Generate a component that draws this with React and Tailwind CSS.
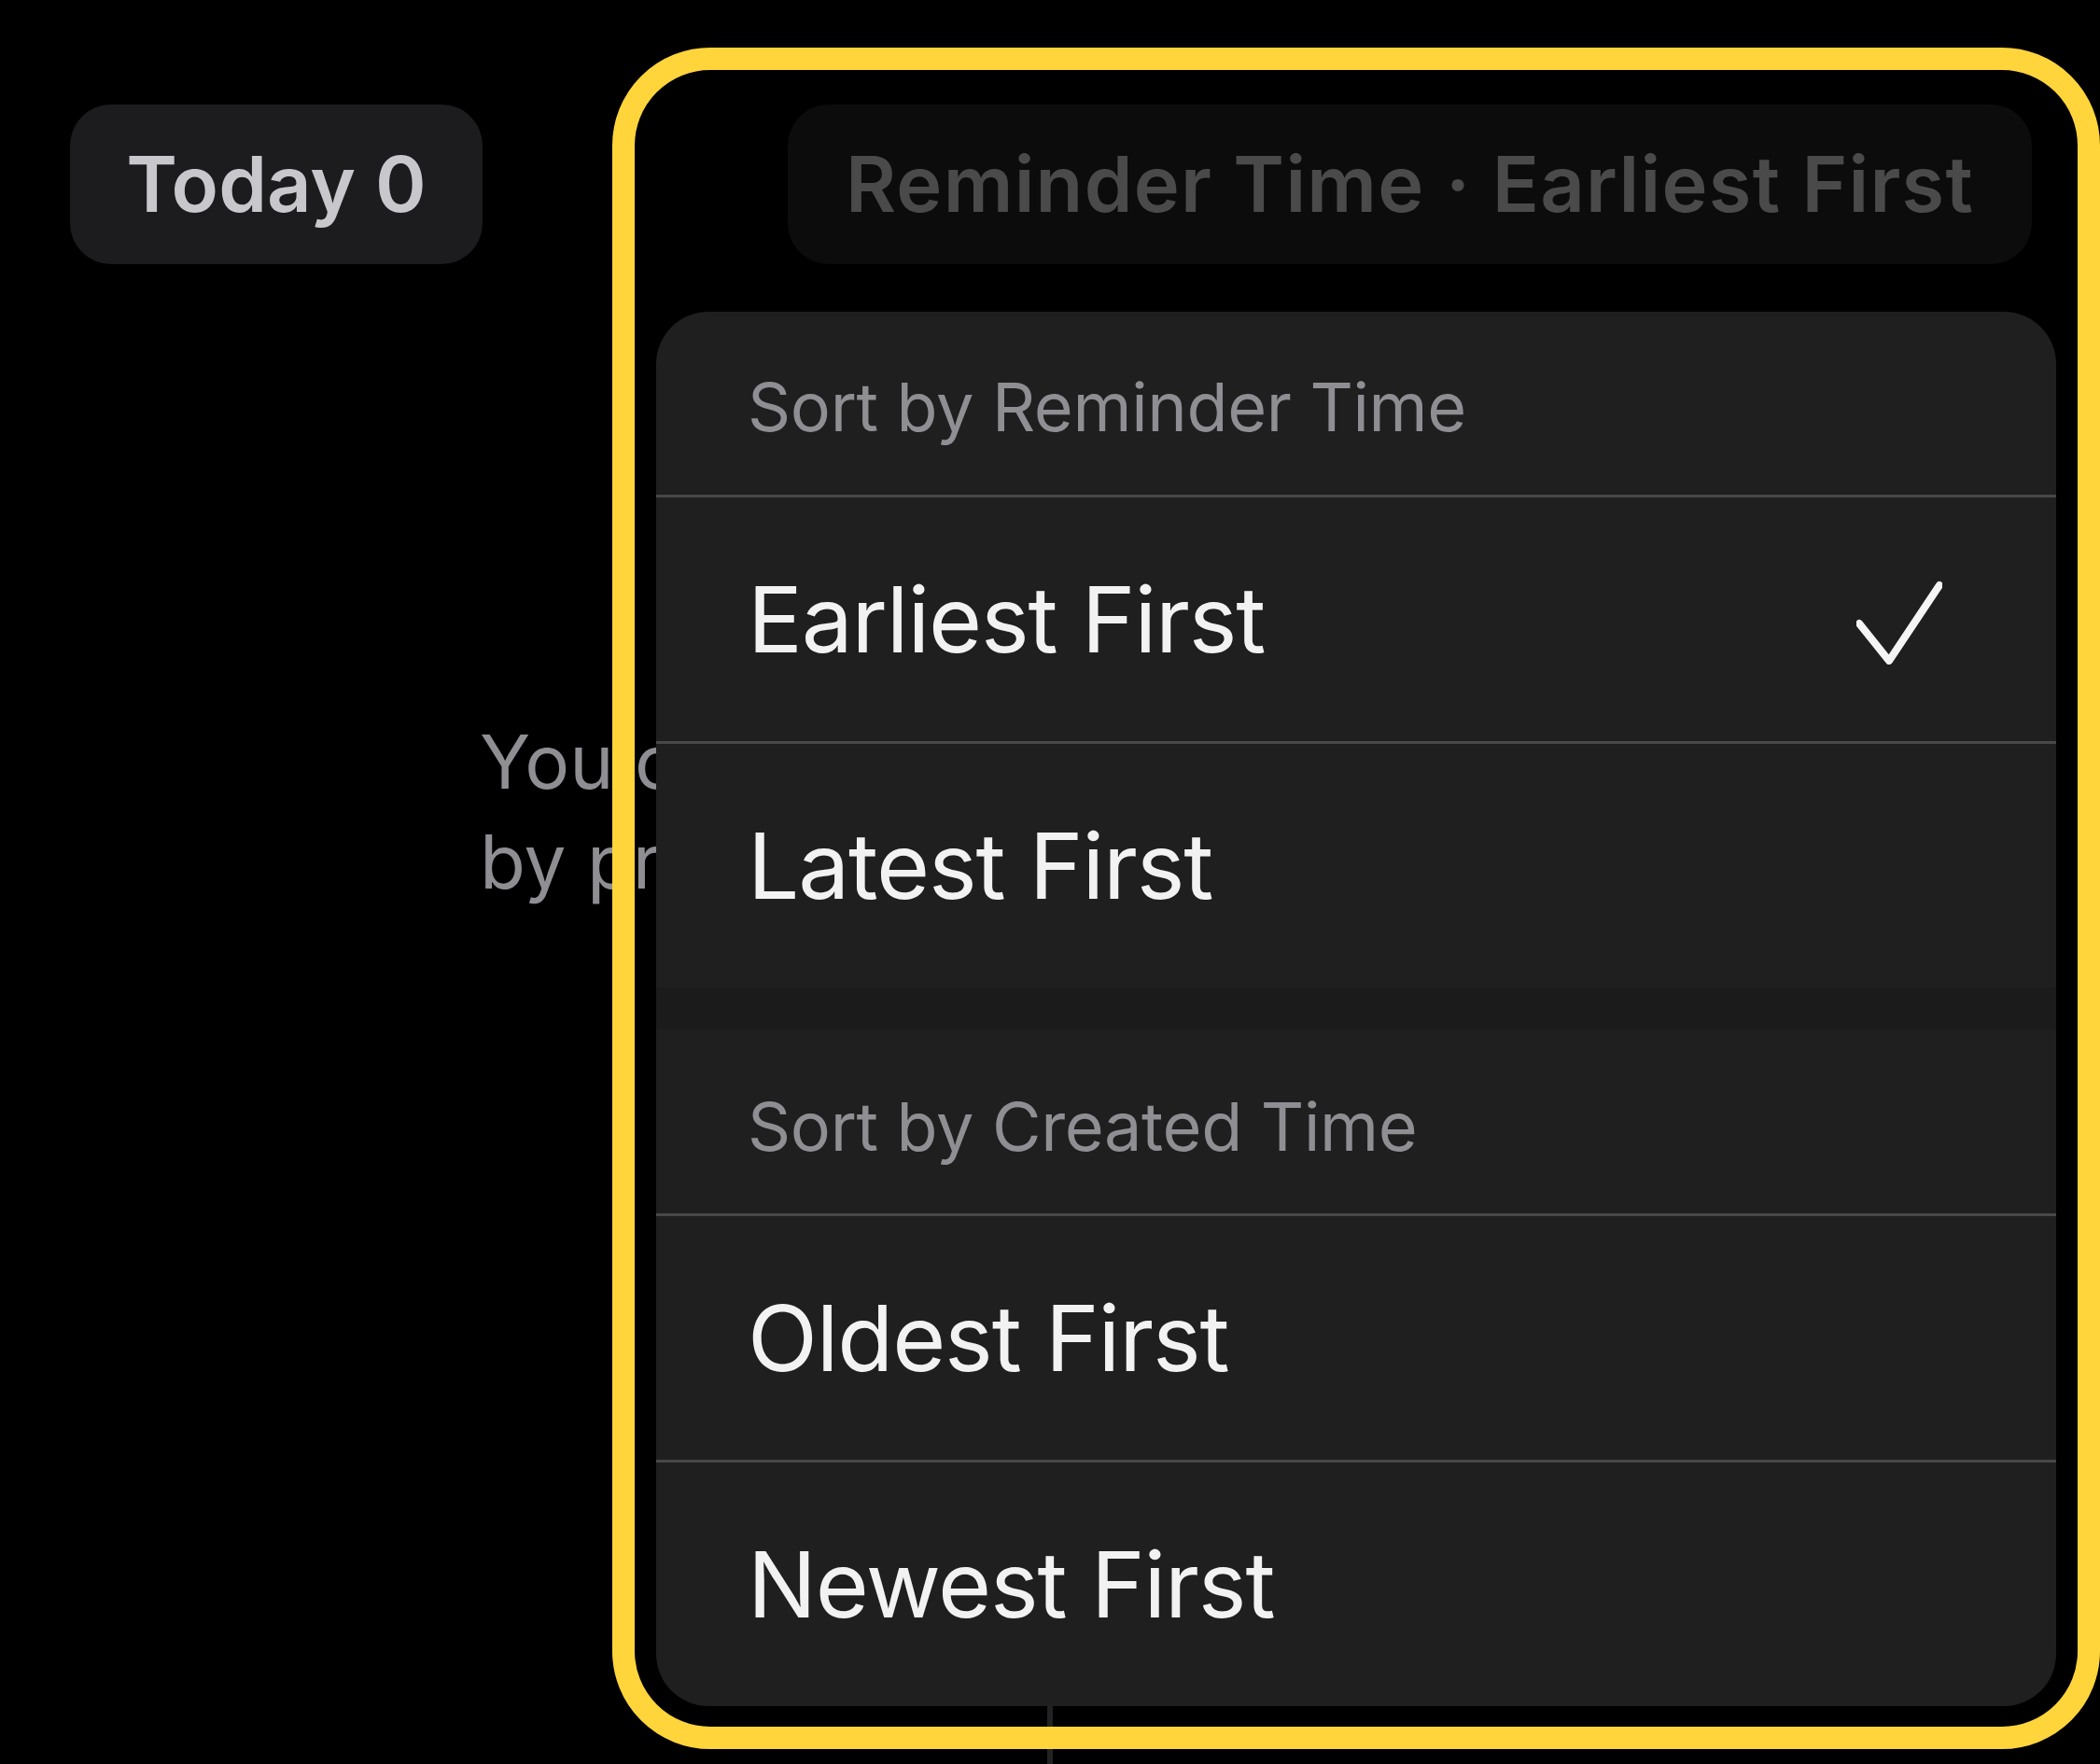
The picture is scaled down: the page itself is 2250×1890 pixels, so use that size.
import React from 'react';

const font = { fontFamily: 'Inter, "Noto Sans", sans-serif' };

const Check = () => (
    <svg width="92" height="96" viewBox="0 0 92 96" fill="none">
        <path d="M3 52 L35 92 L89 11" stroke="#f5f5f5" strokeWidth="8" strokeLinecap="round" strokeLinejoin="round" />
    </svg>
);

const SectionHeader = ({ label, className = '' }) => (
    <div className={`flex items-center pl-[98px] text-[72px] tracking-[-0.005em] text-[#8e8e93] ${className}`}>
        {label}
    </div>
);

const Option = ({ label, checked, divider = true }) => (
    <div className={`flex h-[264px] items-center justify-between pl-[98px] pr-[122px] ${divider ? 'border-t-[3px] border-[#48484a]' : ''}`}>
        <span className="text-[98px] leading-none tracking-[-0.012em] text-[#f2f2f2]">{label}</span>
        {checked && <Check />}
    </div>
);

const App = () => {
    return (
        <div className="relative w-[2250px] h-[1890px] bg-black overflow-hidden" style={font}>
            {/* Top bar */}
            <div className="flex justify-between pl-[75px] pr-[73px] pt-[112px]">
                <div className="flex h-[171px] w-[442px] items-center justify-center rounded-[44px] bg-[#1c1c1e] text-[83px] font-semibold text-[#c7c7cc]">
                    Today 0
                </div>
                <div className="flex h-[171px] w-[1333px] items-center justify-center rounded-[44px] bg-[#0b0c0b] text-[83px] font-semibold tracking-[0.015em] text-[#4a4a4a]">
                    Reminder Time · Earliest First
                </div>
            </div>

            {/* Empty state, covered by the menu */}
            <div className="mt-[479px] w-[703px] overflow-hidden pl-[514px] text-[80px] leading-[107px] whitespace-nowrap text-[#8e8e93]">
                You can change the sort order
                <br />
                by pressing the button above.
            </div>

            {/* Divider below */}
            <div className="absolute left-[1122px] top-[1827px] h-[63px] w-[6px] bg-[#222222]"></div>

            {/* Sort menu */}
            <div className="absolute left-[703px] top-[334px] w-[1500px] rounded-[56px] bg-[#1f1f1f] overflow-hidden">
                <SectionHeader label="Sort by Reminder Time" className="h-[196px] pt-[8px]" />
                <Option label="Earliest First" checked />
                <Option label="Latest First" />
                <div className="h-[45px] bg-[#1b1b1b]"></div>
                <SectionHeader label="Sort by Created Time" className="h-[197px] pt-[10px]" />
                <Option label="Oldest First" />
                <Option label="Newest First" />
            </div>

            {/* Highlight frame */}
            <div className="absolute left-[656px] top-[51px] h-[1823px] w-[1594px] rounded-[105px] border-[24px] border-[#ffd53b] pointer-events-none"></div>
        </div>
    );
};

export default App;
